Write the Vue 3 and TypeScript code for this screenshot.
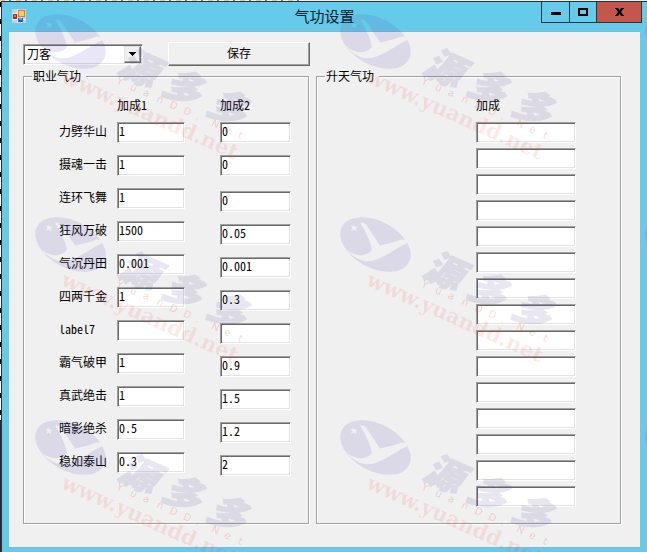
<script setup lang="ts">
import { reactive, ref } from 'vue'

interface Skill {
  name: string
  first: string
  second: string
}

const job = ref('刀客')
const jobs: string[] = ['刀客', '剑客', '枪客', '弓手', '医生']

const skills = reactive<Skill[]>([
  { name: '力劈华山', first: '1', second: '0' },
  { name: '摄魂一击', first: '1', second: '0' },
  { name: '连环飞舞', first: '1', second: '0' },
  { name: '狂风万破', first: '1500', second: '0.05' },
  { name: '气沉丹田', first: '0.001', second: '0.001' },
  { name: '四两千金', first: '1', second: '0.3' },
  { name: 'label7', first: '', second: '' },
  { name: '霸气破甲', first: '1', second: '0.9' },
  { name: '真武绝击', first: '1', second: '1.5' },
  { name: '暗影绝杀', first: '0.5', second: '1.2' },
  { name: '稳如泰山', first: '0.3', second: '2' },
])

const ascension = reactive<string[]>(Array.from({ length: 15 }, () => ''))

const marks = [14, 217, 420].flatMap((y) => [35, 340, 645].map((x) => ({ x, y })))
</script>

<template>
  <div class="desktop">
    <main class="window">
      <header class="titlebar">
        <svg class="app-icon" width="14" height="14" viewBox="0 0 14 14" aria-hidden="true">
          <rect width="14" height="14" fill="#c3cede" />
          <path d="M0 4.500H6M5.500 0V14M0 10.500H14M9.500 8V14" stroke="#e9eef5" fill="none" />
          <rect x="6" y="1" width="7" height="7" fill="#d9822b" />
          <rect x="7" y="2" width="5" height="5" fill="#f7cf62" />
          <rect x="1" y="5" width="4" height="5" fill="#a52f1d" />
          <rect x="2" y="6" width="2" height="2" fill="#e0714f" />
          <rect x="6" y="9" width="5" height="4" fill="#2263b5" />
          <rect x="7" y="9" width="3" height="2" fill="#58a4ea" />
        </svg>
        <h1>气功设置</h1>
        <div class="controls">
          <button type="button" class="minimize" aria-label="最小化">
            <svg width="10" height="10" viewBox="0 0 10 10"><path d="M0 5h10v3H0z" /></svg>
          </button>
          <button type="button" class="maximize" aria-label="最大化">
            <svg width="10" height="8" viewBox="0 0 10 8">
              <path fill-rule="evenodd" d="M0 0h10v8H0zM2 2v4h6V2z" />
            </svg>
          </button>
          <button type="button" class="close" aria-label="关闭">
            <svg width="9" height="8" viewBox="0 0 9 8">
              <path d="M0 0h3l1.500 2.300L6 0h3v1H8.200L6 4l2.200 3H9v1H6L4.500 5.700 3 8H0V7h.8L3 4 .8 1H0z" />
            </svg>
          </button>
        </div>
      </header>

      <form class="client" @submit.prevent>
        <div class="toolbar">
          <div class="combo">
            <select v-model="job" aria-label="职业">
              <option v-for="item in jobs" :key="item">{{ item }}</option>
            </select>
            <span class="drop" aria-hidden="true">
              <svg width="7" height="4" viewBox="0 0 7 4"><path d="M0 0h7v1H6v1H5v1H4v1H3V3H2V2H1V1H0z" /></svg>
            </span>
          </div>
          <button type="submit" class="save">保存</button>
        </div>

        <div class="groups">
          <fieldset class="job-group">
            <legend>职业气功</legend>
            <div class="line heads">
              <span></span>
              <span>加成1</span>
              <span>加成2</span>
            </div>
            <div v-for="(skill, i) in skills" :key="skill.name" class="line skill" :class="{ lowered: i > 1 }">
              <label :for="`skill-${i}`">{{ skill.name }}</label>
              <input :id="`skill-${i}`" v-model="skill.first" type="text" class="first" />
              <input v-model="skill.second" type="text" class="second" :aria-label="`${skill.name} 加成2`" />
            </div>
          </fieldset>

          <fieldset class="ascension-group">
            <legend>升天气功</legend>
            <div class="stack">
              <span class="stack-head">加成</span>
              <input
                v-for="(_, i) in ascension"
                :key="i"
                v-model="ascension[i]"
                type="text"
                :aria-label="`加成 ${i + 1}`"
              />
            </div>
          </fieldset>
        </div>
      </form>
    </main>

    <svg class="watermark" aria-hidden="true">
      <defs>
        <mask id="swoosh" maskUnits="userSpaceOnUse" x="-5" y="-5" width="90" height="70">
          <rect x="-5" y="-5" width="90" height="70" fill="#fff" />
          <path
            d="M20 5.500Q24 5 26 7.500L40 28.500Q52 26 62 22.500L66 23L67.500 26C58 30 50 37 38 42Q31 45 24 44C16 42 11 38 5 31C10 36 17 39 23 38Q29 37 32 33Q31 26 27 18.500Q24 11 20 5.500Z"
            fill="#000"
          />
          <path d="M13 7l1.500 2.500 3.500.5-2.500 1.500 1 3-2.500-2-3 1.500 1.500-3-2-2.500 3 .5z" fill="#000" />
        </mask>
        <g id="mark">
          <g mask="url(#swoosh)">
            <ellipse cx="35.500" cy="27.500" rx="38" ry="23.500" transform="rotate(28 35.500 27.500)" class="violet" />
          </g>
          <g transform="translate(84 62) rotate(24)">
            <text class="brand" x="-4 44 93" y="-2">源多多</text>
            <text class="latin" x="0 15 29 44 58 73 87 104 118 133" y="8">YuanDD.Net</text>
          </g>
          <text class="site" transform="translate(25 68) rotate(24)">www.yuandd.net</text>
        </g>
      </defs>
      <use v-for="(m, i) in marks" :key="i" href="#mark" :x="m.x" :y="m.y" />
    </svg>
  </div>
</template>

<style>
body {
  background: #66cbea;
}
</style>

<style scoped>
.desktop {
  position: relative;
  display: flex;
  box-sizing: border-box;
  min-height: 100vh;
  padding: 1px 0 0 1px;
  overflow: hidden;
  background:
    repeating-linear-gradient(90deg, #d8c9a4 0 5px, #eef4ef 5px 9px, #6b747c 9px 11px, #f4f7f2 11px 16px) 0 0 / 300px 1px no-repeat,
    linear-gradient(#2a2830, #2a2830) 0 420px / 1px 100% no-repeat,
    repeating-linear-gradient(#fff 0 2px, #000 2px 7px, #fff 7px 17px) 0 0 / 1px 100% no-repeat,
    #e8f2ee;
  color: #000;
  font-family: 'Noto Sans CJK SC', sans-serif;
  font-size: 12px;
  line-height: 14px;
  font-feature-settings: 'hwid';
}

.window {
  display: flex;
  flex: 1;
  flex-direction: column;
  padding: 0 7px 5px;
  border: solid #27333b;
  border-width: 1px 0 0 1px;
  background: #66cbea;
}

.titlebar {
  display: grid;
  grid-template-columns: 1fr auto 1fr;
  align-items: start;
  height: 29px;
}

.app-icon {
  margin: 7px 0 0 3px;
}

h1 {
  margin: 4px 0 0;
  color: #0b1a2c;
  font-size: 15px;
  font-weight: 400;
  line-height: 20px;
}

.controls {
  display: flex;
  justify-self: end;
  margin-right: -2px;
}

.controls button {
  display: flex;
  align-items: center;
  justify-content: center;
  box-sizing: border-box;
  width: 27px;
  height: 21px;
  padding: 0;
  border: solid #27333b;
  border-width: 0 0 1px 1px;
  background: transparent;
}

.controls .minimize {
  width: 28px;
}

.controls .close {
  width: 46px;
  border-right-width: 1px;
  background: #c4574b;
}

.client {
  flex: 1;
  padding: 10px 19px 23px 14px;
  border-top: 1px solid #7db9d3;
  border-bottom: 1px solid #7db9d3;
  background: #f0f0f0;
}

.toolbar {
  display: flex;
  align-items: center;
  gap: 25px;
  height: 24px;
  margin-bottom: 3px;
}

.combo {
  display: grid;
  align-items: center;
  width: 120px;
}

.combo > * {
  grid-area: 1 / 1;
}

select,
input {
  box-sizing: border-box;
  height: 21px;
  margin: 0;
  border: 1px solid;
  border-color: #a0a0a0 #fff #fff #a0a0a0;
  border-radius: 0;
  outline: 0;
  background: #fff;
  box-shadow: inset 1px 1px #696969, inset -1px -1px #e3e3e3;
  color: #000;
  font: inherit;
  font-feature-settings: inherit;
}

select {
  width: 100%;
  padding: 0 20px 0 3px;
  appearance: none;
}

input {
  padding: 0 1px 4px;
}

.drop {
  display: flex;
  align-items: center;
  justify-content: center;
  justify-self: end;
  box-sizing: border-box;
  width: 17px;
  height: 17px;
  margin-right: 2px;
  border: 1px solid;
  border-color: #e3e3e3 #696969 #696969 #e3e3e3;
  background: #f0f0f0;
  box-shadow: inset -1px -1px #a0a0a0;
  pointer-events: none;
}

.save {
  box-sizing: border-box;
  width: 142px;
  height: 24px;
  padding: 0 0 2px;
  border: 1px solid;
  border-color: #fff #696969 #696969 #fff;
  border-radius: 0;
  background: #f0f0f0;
  box-shadow: inset -1px -1px #a0a0a0;
  color: #000;
  font: inherit;
}

.groups {
  display: flex;
  gap: 7px;
}

fieldset {
  box-sizing: border-box;
  min-width: 0;
  margin: 0;
  border: 1px solid #a0a0a0;
  box-shadow: 1px 1px #fff, inset 1px 1px #fff;
}

legend {
  margin-left: 8px;
  padding: 0 5px 0 1px;
  background: #f0f0f0;
}

.job-group {
  flex: 286 1 286px;
  padding: 15px 0 0 35px;
}

.job-group legend {
  margin-left: -27px;
}

.ascension-group {
  flex: 305 1 305px;
  padding: 15px 44px 16px 0;
}

.line {
  display: grid;
  grid-template-columns: 58px 103px 71px;
  align-items: start;
}

.heads {
  margin-bottom: 10px;
}

.skill {
  height: 33px;
}

.skill label {
  padding-top: 2px;
}

.first {
  width: 68px;
}

.second {
  width: 71px;
}

.lowered .second {
  margin-top: 3px;
}

.stack {
  display: flex;
  flex-direction: column;
  gap: 5px;
  width: 100px;
  margin-left: auto;
}

.stack-head {
  margin-bottom: 5px;
}

.watermark {
  position: absolute;
  inset: 0;
  width: 100%;
  height: 100%;
  pointer-events: none;
}

.violet {
  fill: rgba(72, 60, 170, 0.12);
}

.brand {
  fill: #483c96;
  stroke: #483c96;
  stroke-width: 1px;
  opacity: 0.12;
  font-size: 38px;
  font-style: italic;
  font-weight: 900;
}

.latin {
  fill: rgba(225, 70, 70, 0.22);
  font-family: 'DejaVu Sans', sans-serif;
  font-size: 10px;
}

.site {
  fill: rgba(240, 70, 70, 0.13);
  font-family: 'DejaVu Serif', serif;
  font-size: 21px;
  font-weight: 700;
}
</style>
